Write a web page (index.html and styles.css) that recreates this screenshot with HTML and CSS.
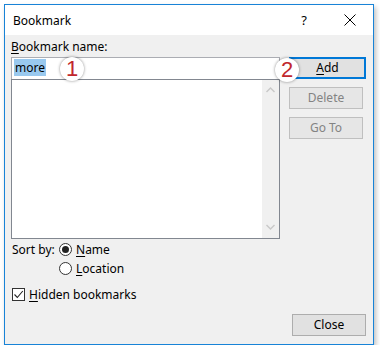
FILE: index.html
```html
<!DOCTYPE html>
<html lang="en">
<head>
    <meta charset="UTF-8">
    <title>Bookmark</title>
    <link rel="stylesheet" href="styles.css">
</head>
<body>
    <div class="dialog">
        <div class="titlebar">
            <span class="title">Bookmark</span>
            <span class="help">?</span>
            <span class="close-x">
                <svg width="12" height="12" viewBox="0 0 12 12"><path d="M0.5 0.5L11.5 11.5M11.5 0.5L0.5 11.5" stroke="#000" stroke-width="1" fill="none"/></svg>
            </span>
        </div>
        <div class="body">
            <div class="main">
                <div class="left">
                    <div class="label"><u>B</u>ookmark name:</div>
                    <div class="name-box">
                        <span class="sel">more</span>
                        <span class="badge badge-1">1</span>
                    </div>
                    <div class="list">
                        <div class="list-area"></div>
                        <div class="scroll">
                            <svg width="9" height="6" viewBox="0 0 9 6"><path d="M0.5 5L4.5 1L8.5 5" stroke="#c8c8c8" stroke-width="1.4" fill="none"/></svg>
                            <svg width="9" height="6" viewBox="0 0 9 6"><path d="M0.5 1L4.5 5L8.5 1" stroke="#c8c8c8" stroke-width="1.4" fill="none"/></svg>
                        </div>
                    </div>
                    <div class="sort">
                        <span class="sort-label">Sort by:</span>
                        <div class="radios">
                            <div class="opt"><span class="radio on"></span><span><u>N</u>ame</span></div>
                            <div class="opt"><span class="radio"></span><span><u>L</u>ocation</span></div>
                        </div>
                    </div>
                    <div class="hidden-row">
                        <span class="check">
                            <svg width="11" height="11" viewBox="0 0 11 11"><path d="M1.5 5.5L4.3 8.5L9.8 2" stroke="#222" stroke-width="1.1" fill="none"/></svg>
                        </span>
                        <span><u>H</u>idden bookmarks</span>
                    </div>
                </div>
                <div class="right">
                    <div class="btn btn-add"><u>A</u>dd<span class="badge badge-2">2</span></div>
                    <div class="btn disabled">Delete</div>
                    <div class="btn disabled">Go To</div>
                </div>
            </div>
            <div class="footer">
                <div class="btn">Close</div>
            </div>
        </div>
    </div>
</body>
</html>
```

FILE: styles.css
```css
*{
    margin: 0;
    padding: 0;
    box-sizing: border-box;
}
body{
    background: #fff;
    font-family: "Noto Sans", "Liberation Sans", sans-serif;
    font-size: 12px;
    color: #000;
}
u{
    text-decoration: underline;
    text-underline-offset: 2px;
}
.dialog{
    margin: 4px 0 0 4px;
    width: 370px;
    height: 341px;
    border: 1px solid #1883d7;
    background: #f0f0f0;
    box-shadow: 2px 3px 5px rgba(0,0,0,0.25);
    display: flex;
    flex-direction: column;
}
.titlebar{
    height: 30px;
    background: #fff;
    display: flex;
    align-items: center;
    padding-left: 8px;
}
.title{
    flex: 1;
    font-size: 12px;
}
.help{
    width: 46px;
    text-align: center;
    font-size: 13px;
}
.close-x{
    width: 46px;
    display: flex;
    justify-content: center;
}
.body{
    flex: 1;
    padding: 4px 7px 8px 6px;
    display: flex;
    flex-direction: column;
}
.main{
    display: flex;
    gap: 9px;
}
.left{
    width: 272px;
    display: flex;
    flex-direction: column;
}
.label{
    line-height: 16px;
    height: 18px;
}
.name-box{
    position: relative;
    height: 22px;
    border: 1px solid #abadb3;
    border-bottom: none;
    background: #fff;
    padding: 3px 0 0 2px;
    line-height: 14px;
}
.sel{
    background: #99c9ef;
    padding: 0 1px;
}
.badge{
    position: absolute;
    width: 24px;
    height: 24px;
    border-radius: 50%;
    background: #fff;
    box-shadow: 0 0 3px rgba(0,0,0,0.45);
    color: #c1272d;
    font-family: "Liberation Sans", sans-serif;
    font-size: 22px;
    line-height: 24px;
    text-align: center;
}
.badge-1{
    left: 48px;
    top: -1px;
}
.badge-2{
    left: -16px;
    top: -1px;
}
.list{
    height: 160px;
    border: 1px solid #828790;
    background: #fff;
    display: flex;
}
.list-area{
    flex: 1;
}
.scroll{
    width: 17px;
    background: #f0f0f0;
    display: flex;
    flex-direction: column;
    justify-content: space-between;
    align-items: center;
    padding: 7px 0 8px 0;
}
.sort{
    display: flex;
    margin-top: 1px;
    padding-left: 1px;
}
.sort-label{
    width: 47px;
    line-height: 19px;
}
.radios{
    display: flex;
    flex-direction: column;
}
.opt{
    display: flex;
    align-items: center;
    height: 19px;
}
.radio{
    width: 13px;
    height: 13px;
    border-radius: 50%;
    border: 1px solid #333;
    background: #fff;
    margin-right: 4px;
    display: flex;
    align-items: center;
    justify-content: center;
}
.radio.on::after{
    content: "";
    width: 7px;
    height: 7px;
    border-radius: 50%;
    background: #222;
}
.hidden-row{
    display: flex;
    align-items: center;
    margin-top: 8px;
    padding-left: 1px;
}
.check{
    width: 13px;
    height: 13px;
    border: 1px solid #333;
    background: #fff;
    margin-right: 4px;
    display: flex;
    align-items: center;
    justify-content: center;
}
.right{
    display: flex;
    flex-direction: column;
    gap: 8px;
    padding-top: 18px;
}
.btn{
    position: relative;
    width: 74px;
    height: 22px;
    border: 1px solid #adadad;
    background: #e1e1e1;
    text-align: center;
    line-height: 20px;
}
.btn-add{
    width: 77px;
    border: 2px solid #0078d7;
    line-height: 18px;
}
.disabled{
    color: #838383;
    border-color: #bfbfbf;
    background: #e6e6e6;
}
.footer{
    margin-top: auto;
    display: flex;
    justify-content: flex-end;
}
```
